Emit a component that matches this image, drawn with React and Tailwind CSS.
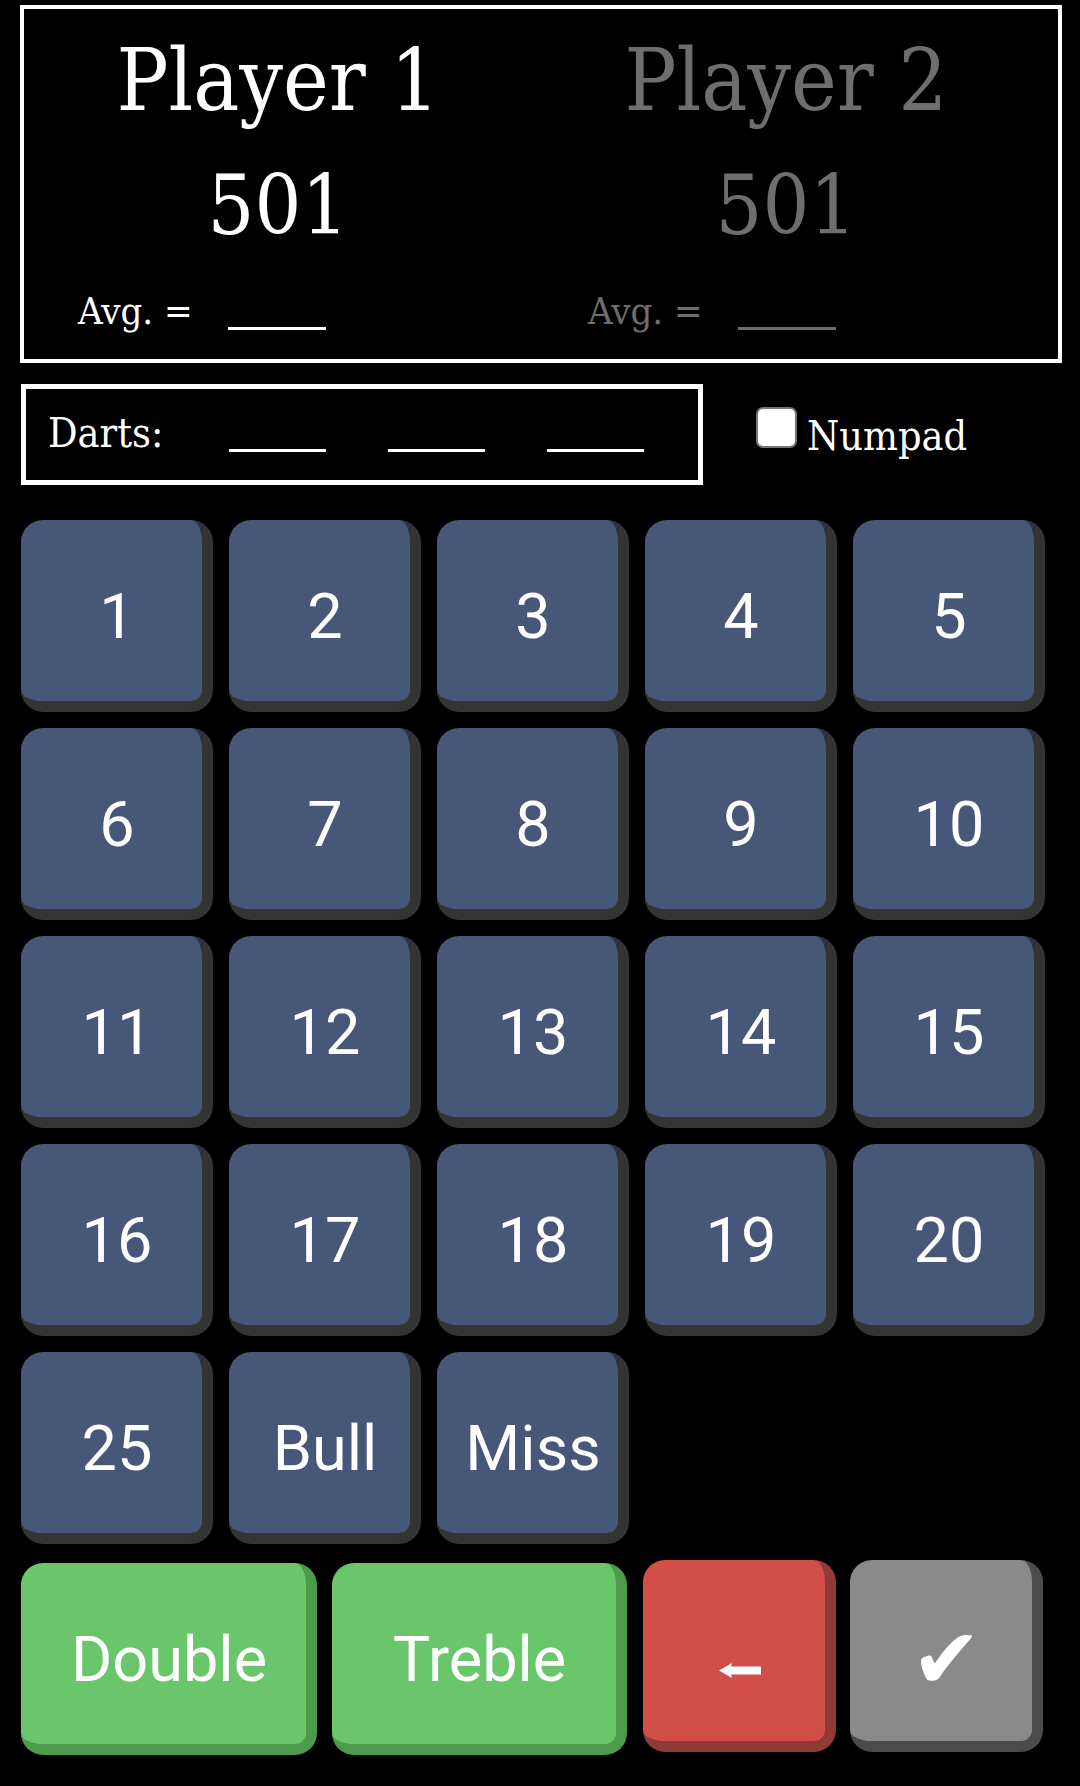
import React from "react";

const serif = "font-['DejaVu_Serif','Liberation_Serif',serif] [font-stretch:condensed]";
const sans = "font-['Roboto','Liberation_Sans',sans-serif] [font-stretch:normal]";

const keys = ["1", "2", "3", "4", "5", "6", "7", "8", "9", "10", "11", "12", "13", "14", "15", "16", "17", "18", "19", "20", "25", "Bull", "Miss"];

function PlayerColumn({ name, color, pad }) {
  return (
    <div className={`flex flex-col ${color}`}>
      <div className="text-center text-[86px] leading-none mt-[28px]">{name}</div>
      <div className="text-center text-[82px] leading-none mt-[42px]">501</div>
      <div className={`flex items-baseline text-[38px] leading-none mt-[45px] ${pad}`}>
        <span className="w-[150px]">Avg. =</span>
        <span className={`inline-block w-[98px] h-[3px] ${color === "text-white" ? "bg-white" : "bg-[#6e6e6e]"} translate-y-[6px]`} />
      </div>
    </div>
  );
}

function Key({ label, className }) {
  return (
    <button
      className={`flex items-center justify-center pl-[11px] pt-[11px] rounded-[22px] border-r-[11px] border-b-[11px] text-white text-[63px] leading-none ${sans} ${className}`}
    >
      {label}
    </button>
  );
}

export default function App() {
  return (
    <div className={`w-[1080px] h-[1786px] bg-black overflow-hidden ${serif}`}>
      <div className="ml-[20px] mt-[5px] w-[1042px] h-[358px] border-4 border-white">
        <div className="grid grid-cols-[508px_508px]">
          <PlayerColumn name="Player 1" color="text-white" pad="pl-[54px]" />
          <PlayerColumn name="Player 2" color="text-[#6e6e6e]" pad="pl-[56px]" />
        </div>
      </div>

      <div className="flex items-start mt-[21px]">
        <div className="ml-[21px] w-[682px] h-[101px] border-[5px] border-white flex items-baseline pl-[22px] pt-[24px] text-white text-[41px] leading-none">
          <span className="w-[181px]">Darts:</span>
          <span className="inline-block w-[97px] h-[3px] bg-white translate-y-[5px]" />
          <span className="inline-block w-[97px] h-[3px] bg-white translate-y-[5px] ml-[62px]" />
          <span className="inline-block w-[97px] h-[3px] bg-white translate-y-[5px] ml-[62px]" />
        </div>
        <label className="ml-[53px] mt-[23px] flex items-end text-white text-[41px] leading-none">
          <span className="w-[41px] h-[41px] rounded-[7px] bg-white border-2 border-[#767676]" />
          <span className="ml-[10px] translate-y-[9px]">Numpad</span>
        </label>
      </div>

      <div className="ml-[21px] mt-[35px] grid grid-cols-[repeat(5,192px)] gap-4">
        {keys.map((k) => (
          <Key key={k} label={k} className="h-[192px] bg-[#465778] border-[#343434]" />
        ))}
      </div>

      <div className="flex items-start mt-[16px]">
        <Key label="Double" className="ml-[21px] mt-[3px] w-[296px] h-[192px] bg-[#6ac66a] border-[#4e9a4b]" />
        <Key label="Treble" className="ml-[15px] mt-[3px] w-[295px] h-[192px] bg-[#6ac66a] border-[#4e9a4b]" />
        <Key
          label={
            <svg width="42" height="15" viewBox="0 0 42 15" className="mt-[28px]">
              <path d="M0 7.5 L13 0 L12 3.5 L42 3.5 L42 11.5 L12 11.5 L13 15 Z" fill="white" />
            </svg>
          }
          className="ml-[16px] w-[193px] h-[192px] bg-[#d14f48] border-[#8e3a35]"
        />
        <Key
          label={<span className="font-['DejaVu_Sans',sans-serif] text-[84px] mt-[6px]">✔</span>}
          className="ml-[14px] w-[193px] h-[192px] bg-[#8a8a8a] border-[#4b4b4b]"
        />
      </div>
    </div>
  );
}
